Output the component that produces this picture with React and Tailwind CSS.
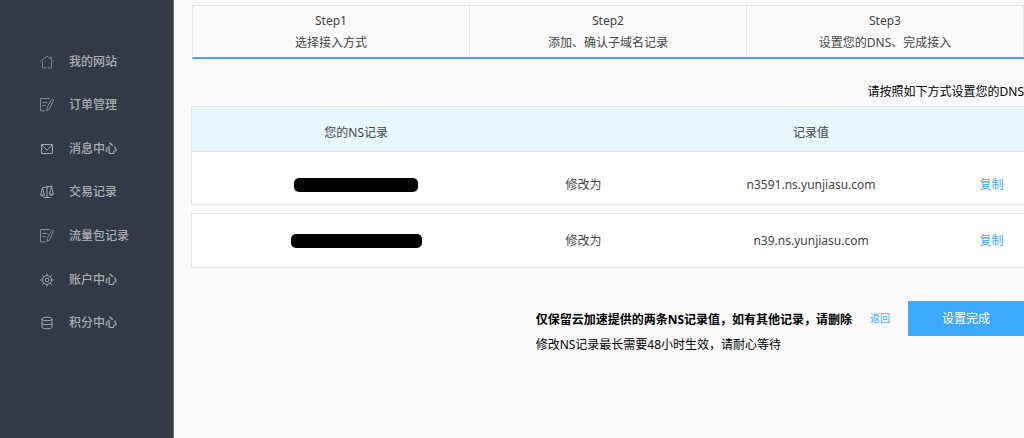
import React from 'react';

const menuItems = [
  { label: '我的网站', icon: 'home' },
  { label: '订单管理', icon: 'note' },
  { label: '消息中心', icon: 'mail' },
  { label: '交易记录', icon: 'scale' },
  { label: '流量包记录', icon: 'note' },
  { label: '账户中心', icon: 'gear' },
  { label: '积分中心', icon: 'coins' },
];

const steps = [
  { title: 'Step1', text: '选择接入方式' },
  { title: 'Step2', text: '添加、确认子域名记录' },
  { title: 'Step3', text: '设置您的DNS、完成接入' },
];

const icons = {
  home: (
    <g className="text-[#7d848e]">
      <path d="M.3 6.6 7 .9l6.7 5.7M2.5 6.5v6.5h3.3M8.2 13h3.3V6.5M5.8 13v-.8M8.2 13v-.8M11 4.2V1.3" />
    </g>
  ),
  note: (
    <g className="text-[#858b95]">
      <path d="M9.8.5H.5v12.4h4.8M2.5 4.5h5M2.5 7.5h3" />
      <path d="M11.6 1.6c.8-.8 2.2-.2 1.8 1L9.6 10.8l-2.7 2 .2-3.2z" />
    </g>
  ),
  mail: (
    <g className="text-[#a3a8af]">
      <path d="M1.5 2.5h11v9h-11zM1.8 2.8 7 8.4l5.2-5.6" />
    </g>
  ),
  scale: (
    <g className="text-[#a3a8af]">
      <path d="M7 .8v12M3.5 12.5h7M2.2 2.8 12.6 1" />
      <path d="M2.4 3.2.6 10h3.8zM11.4 1.6 9.4 9.2h4zM.6 10.3c.8 1 3 1 3.8 0M9.4 9.6c.8 1 3.2 1 4 0" />
    </g>
  ),
  gear: (
    <g className="text-[#a3a8af]">
      <circle cx="7" cy="7" r="4.4" />
      <circle cx="7" cy="7" r="1.8" />
      <path d="M7 .3v2M7 11.7v2M.3 7h2M11.7 7h2M2.2 2.2l1.5 1.5M10.3 10.3l1.5 1.5M2.2 11.8l1.5-1.5M10.3 3.7l1.5-1.5" />
    </g>
  ),
  coins: (
    <g className="text-[#a3a8af]">
      <ellipse cx="7" cy="3" rx="5" ry="1.8" />
      <path d="M2 3v8c0 2.4 10 2.4 10 0V3M2 7c0 2.2 10 2.2 10 0" />
    </g>
  ),
};

const MenuIcon = ({ name }) => (
  <svg viewBox="0 0 14 14" className="h-3.5 w-3.5 shrink-0" fill="none" strokeWidth="1" aria-hidden="true">
    {React.cloneElement(icons[name], { stroke: 'currentColor' })}
  </svg>
);

const Sidebar = () => (
  <aside className="w-[174px] shrink-0 border-r border-[#6b727d] bg-[#323a47] pt-10">
    <nav>
      <ul className="grid h-[305px] auto-rows-fr">
        {menuItems.map((item) => (
          <li key={item.label} className="flex items-center pl-10">
            <a href="#" className="flex items-center gap-[15px] font-medium text-[#a9adb3]">
              <MenuIcon name={item.icon} />
              {item.label}
            </a>
          </li>
        ))}
      </ul>
    </nav>
  </aside>
);

const Steps = () => (
  <ol className="grid grid-cols-3 border-b-2 border-l border-t border-b-[#3daaff] border-l-[#e4e4e4] border-t-[#e4e4e4] text-center leading-[22px] text-[#444]">
    {steps.map((step) => (
      <li key={step.title} className="border-r border-[#e4e4e4] pb-[3px] pt-1">
        <p>{step.title}</p>
        <p>{step.text}</p>
      </li>
    ))}
  </ol>
);

const RecordRow = ({ value, mask, className }) => (
  <tr className={`border border-[#e6e6e6] bg-white ${className}`}>
    <td>
      <span className={`mx-auto block rounded-[5px] bg-black ${mask}`} />
    </td>
    <td>修改为</td>
    <td>{value}</td>
    <td className="pl-1 text-left">
      <button className="text-[#3daaff]">复制</button>
    </td>
  </tr>
);

const RecordTable = () => (
  <table className="-ml-px w-[calc(100%+12px)] table-fixed border-collapse text-center text-[#444]">
    <thead>
      <tr className="h-[45px] border border-[#e2e6e9] bg-[#e8f6ff]">
        <th className="w-[39%] pt-2 font-normal">您的NS记录</th>
        <th className="w-[15%]" />
        <th className="w-[39%] pt-2 font-normal">记录值</th>
        <th />
      </tr>
    </thead>
    <tbody>
      <RecordRow value="n3591.ns.yunjiasu.com" mask="h-3.5 w-[124px]" className="h-[53px] *:pt-3.5" />
      <tr className="h-[9px]">
        <td colSpan={4} />
      </tr>
      <RecordRow value="n39.ns.yunjiasu.com" mask="h-3.5 w-[131px]" className="h-[54px]" />
    </tbody>
  </table>
);

const App = () => (
  <div className="flex min-h-screen overflow-hidden bg-[#fafafa] font-['Noto_Sans','Noto_Sans_CJK_SC',sans-serif] text-xs text-black">
    <Sidebar />
    <main className="min-w-0 flex-1 overflow-hidden pl-[18px] pt-[5px]">
      <Steps />
      <p className="pb-1.5 pt-[25px] text-right">请按照如下方式设置您的DNS</p>
      <RecordTable />
      <div className="mt-[33px] flex items-start justify-end">
        <div className="pt-1.5 leading-[25px]">
          <p className="font-bold">仅保留云加速提供的两条NS记录值，如有其他记录，请删除</p>
          <p>修改NS记录最长需要48小时生效，请耐心等待</p>
        </div>
        <a href="#" className="mx-[18px] text-[10px] leading-[35px] text-[#3daaff]">
          返回
        </a>
        <button className="h-[35px] w-[116px] bg-[#3daaff] text-white">设置完成</button>
      </div>
    </main>
  </div>
);

export default App;
